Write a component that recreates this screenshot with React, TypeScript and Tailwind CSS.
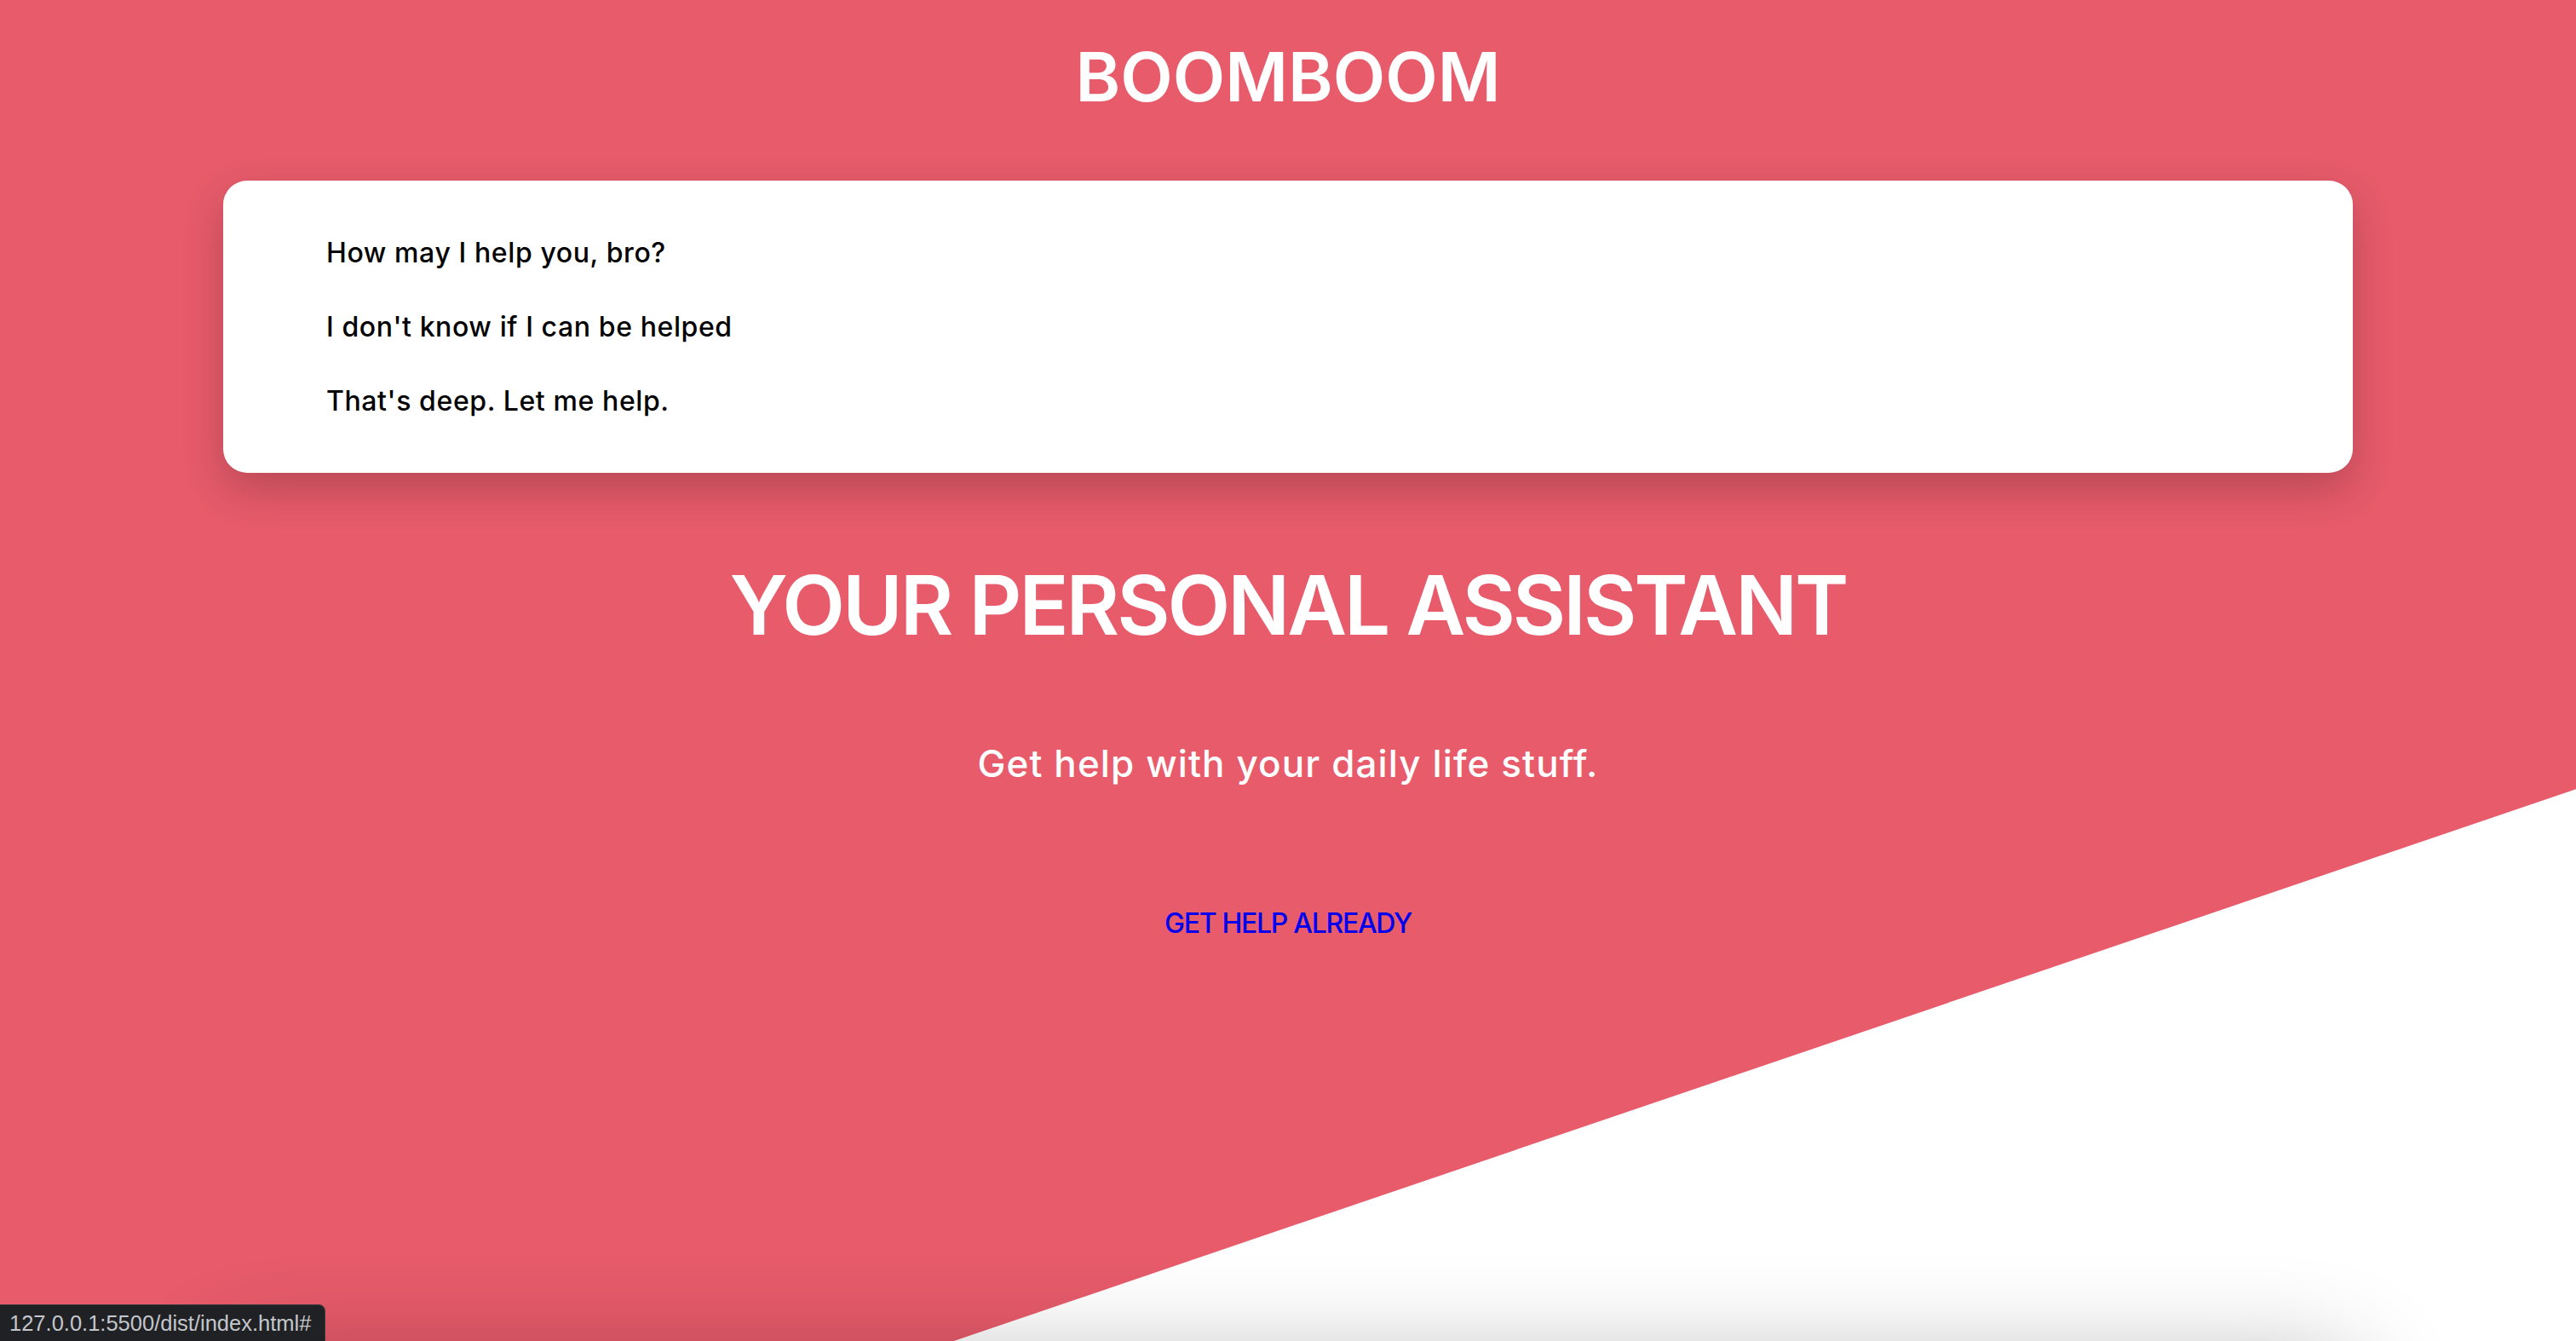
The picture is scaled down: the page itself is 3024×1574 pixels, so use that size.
const lines = [
  "How may I help you, bro?",
  "I don't know if I can be helped",
  "That's deep. Let me help.",
];

export default function App() {
  return (
    <div className="relative h-[1574px] w-full overflow-hidden bg-white font-['Inter','Noto_Sans',sans-serif]">
      {/* Hero */}
      <header className="flex h-[1574px] flex-col items-center bg-[#e75b6b] [clip-path:polygon(0_0,100%_0,100%_58.85%,37.03%_100%,0_100%)]">
        <h1 className="mt-[50px] text-[80px] font-semibold leading-none text-white">BOOMBOOM</h1>

        <div className="mt-[82px] flex w-[2500px] flex-col gap-[55px] rounded-[28px] bg-white pt-[69px] pb-[68px] pl-[121px] shadow-[0_20px_50px_rgba(0,0,0,0.2)]">
          {lines.map((l, i) => (
            <p key={i} className="text-[32px] font-medium leading-none tracking-[0.6px] text-black">
              {l}
            </p>
          ))}
        </div>

        <h2 className="mt-[107px] text-[96px] font-semibold leading-none tracking-[-3px] text-white">YOUR PERSONAL ASSISTANT</h2>
        <p className="mt-[116px] text-[44px] font-medium leading-none tracking-[1.1px] text-white">Get help with your daily life stuff.</p>
        <a href="#" className="mt-[150px] text-[32px] font-medium leading-none tracking-[-1.3px] text-[#0000ee]">
          GET HELP ALREADY
        </a>
      </header>

      {/* Next section, just below the fold */}
      <section className="relative flex justify-center pt-[26px]">
        <div className="h-[600px] w-[2500px] rounded-[28px] bg-white shadow-[0_0_120px_rgba(0,0,0,0.3)]" />
      </section>

      {/* Browser status bubble */}
      <div className="absolute bottom-0 left-0 flex h-[43px] items-center rounded-tr-[8px] border-t border-r border-[#3c3c3f] bg-[#202124] pl-[11px] pr-[16px] font-['Liberation_Sans',sans-serif] text-[25.5px] text-[#c4c7cc]">
        127.0.0.1:5500/dist/index.html#
      </div>
    </div>
  );
}
